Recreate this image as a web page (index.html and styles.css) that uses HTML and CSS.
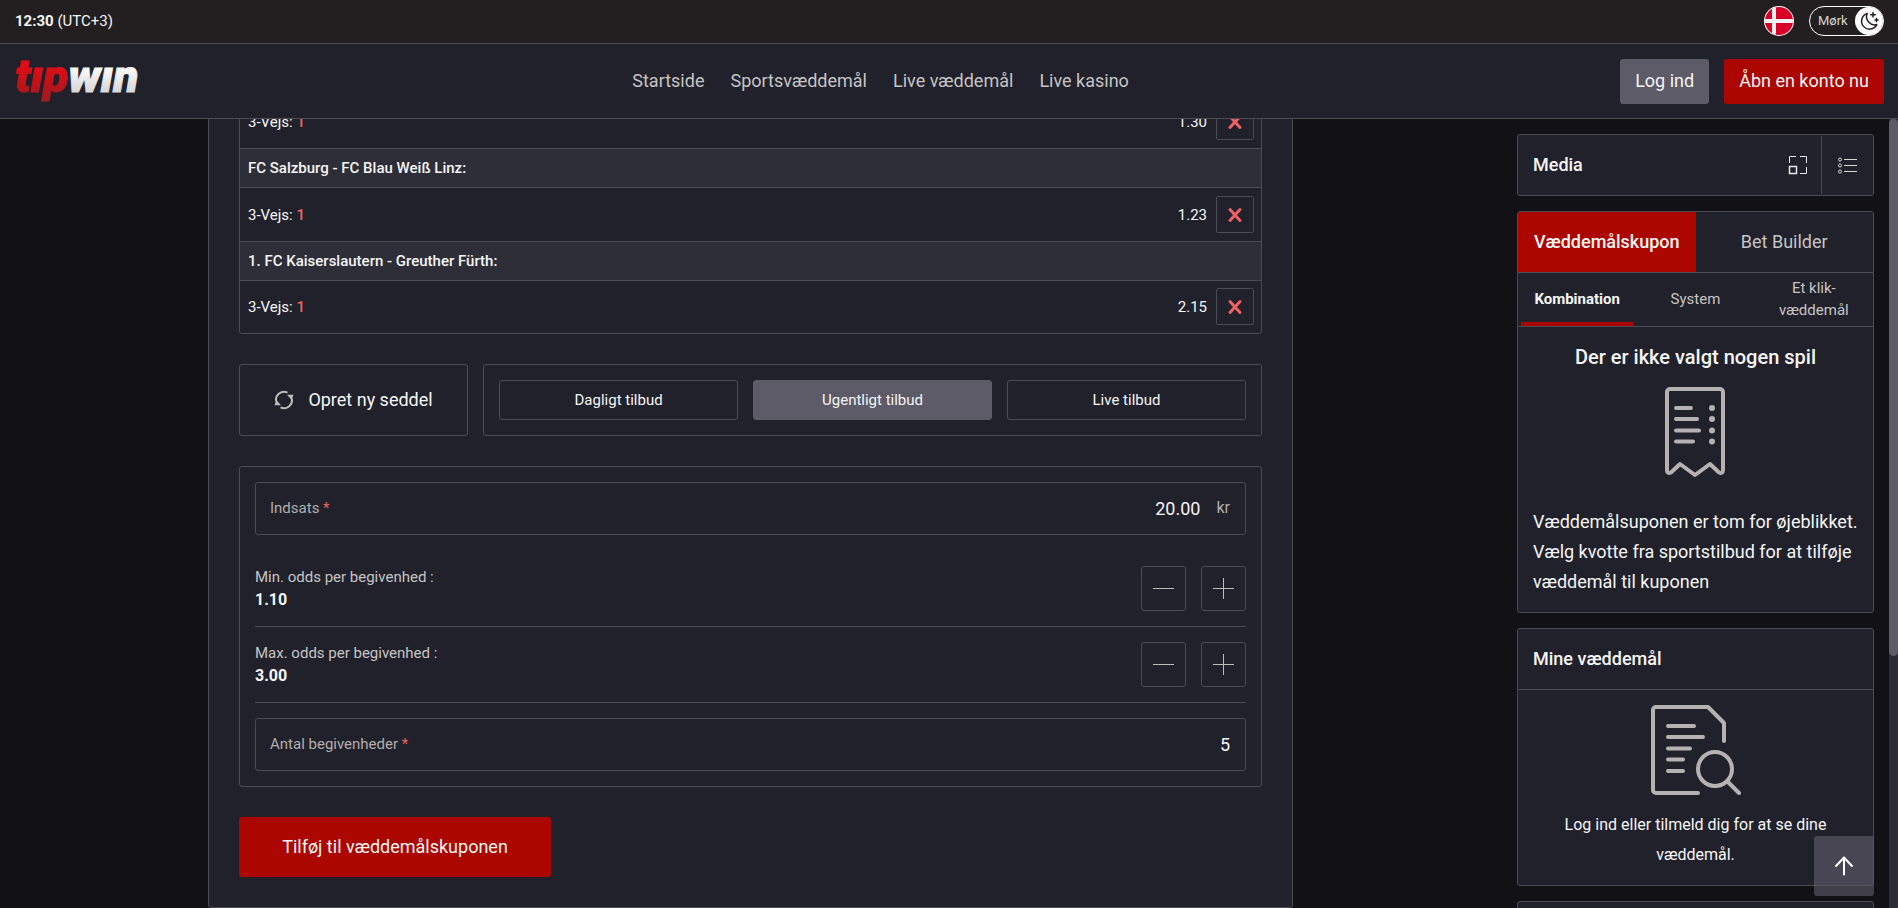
FILE: index.html
```html
<!DOCTYPE html>
<html lang="da">
<head>
<meta charset="utf-8">
<meta name="viewport" content="width=device-width, initial-scale=1">
<title>Tipwin</title>
<link rel="stylesheet" href="styles.css">
</head>
<body>
<div class="topbar">
  <div class="clock"><strong>12:30</strong> (UTC+3)</div>
  <div class="topbar-tools">
    <button class="flag" type="button" aria-label="Dansk">
      <svg width="30" height="30" viewBox="0 0 30 30">
        <clipPath id="disc"><circle cx="15" cy="15" r="14"/></clipPath>
        <circle cx="15" cy="15" r="15" fill="#fff"/>
        <g clip-path="url(#disc)">
          <rect width="30" height="30" fill="#d80027"/>
          <path d="M8 0h4v30h-4zM0 13h30v4H0z" fill="#f0f0f0"/>
        </g>
      </svg>
    </button>
    <button class="theme" type="button">
      <span class="theme-name">Mørk</span>
      <span class="theme-knob">
        <svg width="20" height="20" viewBox="0 0 20 20" fill="none" stroke="#231f20" stroke-width="1.5" stroke-linecap="round" stroke-linejoin="round">
          <path d="M8.2 2.5A8 8 0 1 0 17.8 13.6 8.2 8.2 0 0 1 8.2 2.5z"/>
          <path d="M14 1.500v4.600M11.700 3.800h4.600M17.500 7.500v3M16 9h3"/>
        </svg>
      </span>
    </button>
  </div>
</div>

<header class="header">
  <a class="logo" href="#" aria-label="tipwin">
    <svg width="126" height="60" viewBox="0 0 126 60">
      <defs>
        <linearGradient id="logo-red" x1="0" y1="0" x2="0" y2="1"><stop offset=".3" stop-color="#e30b17"/><stop offset=".9" stop-color="#a3191c"/></linearGradient>
        <linearGradient id="logo-white" x1="0" y1="0" x2="0" y2="1"><stop offset=".3" stop-color="#ffffff"/><stop offset="1" stop-color="#c8c6c6"/></linearGradient>
      </defs>
      <text class="logo-text" x="0" y="41"><tspan fill="url(#logo-red)" stroke="url(#logo-red)">tıp</tspan><tspan fill="url(#logo-white)" stroke="url(#logo-white)">wın</tspan></text>
    </svg>
  </a>
  <nav class="nav">
    <a href="#">Startside</a>
    <a href="#">Sportsvæddemål</a>
    <a href="#">Live væddemål</a>
    <a href="#">Live kasino</a>
  </nav>
  <div class="account">
    <button class="btn btn-grey" type="button">Log ind</button>
    <button class="btn btn-red" type="button">Åbn en konto nu</button>
  </div>
</header>

<div class="page">
  <main class="content">
    <section class="panel">
      <div class="matches">
        <div class="pick">
          <span class="pick-name">3-Vejs: <b>1</b></span>
          <span class="pick-odds">1.30</span>
          <button class="remove" type="button" aria-label="Fjern"><svg width="16" height="16" viewBox="0 0 16 16"><path d="M3 2.500l10 11M13 2.500L3 13.500"/></svg></button>
        </div>
        <h3 class="match">FC Salzburg - FC Blau Weiß Linz:</h3>
        <div class="pick">
          <span class="pick-name">3-Vejs: <b>1</b></span>
          <span class="pick-odds">1.23</span>
          <button class="remove" type="button" aria-label="Fjern"><svg width="16" height="16" viewBox="0 0 16 16"><path d="M3 2.500l10 11M13 2.500L3 13.500"/></svg></button>
        </div>
        <h3 class="match">1. FC Kaiserslautern - Greuther Fürth:</h3>
        <div class="pick">
          <span class="pick-name">3-Vejs: <b>1</b></span>
          <span class="pick-odds">2.15</span>
          <button class="remove" type="button" aria-label="Fjern"><svg width="16" height="16" viewBox="0 0 16 16"><path d="M3 2.500l10 11M13 2.500L3 13.500"/></svg></button>
        </div>
      </div>

      <div class="offers">
        <button class="new-slip" type="button">
          <svg width="20" height="20" viewBox="0 0 20 20" fill="none" stroke="#bdbbbb" stroke-width="2">
            <path d="M2.200 11.500A8 8 0 0 1 13.500 2.600"/>
            <path d="M17.800 8.500A8 8 0 0 1 6.500 17.400"/>
            <path d="M13 4.800h6.500L17.600 10zM7 15.200H.5L2.400 10z" fill="#bdbbbb" stroke="none"/>
          </svg>
          Opret ny seddel
        </button>
        <div class="offer-tabs">
          <button class="offer" type="button">Dagligt tilbud</button>
          <button class="offer offer-active" type="button">Ugentligt tilbud</button>
          <button class="offer" type="button">Live tilbud</button>
        </div>
      </div>

      <form class="form">
        <div class="field">
          <label for="stake">Indsats <i>*</i></label>
          <input id="stake" type="text" value="20.00">
          <span class="unit">kr</span>
        </div>
        <div class="steps">
          <div class="step">
            <div class="step-text"><span>Min. odds per begivenhed :</span><output>1.10</output></div>
            <button class="square" type="button" aria-label="Mindre"><svg width="23" height="23" viewBox="0 0 23 23"><path d="M1 11.500h21"/></svg></button>
            <button class="square" type="button" aria-label="Mere"><svg width="23" height="23" viewBox="0 0 23 23"><path d="M1 11.500h21M11.500 1v21"/></svg></button>
          </div>
          <div class="step">
            <div class="step-text"><span>Max. odds per begivenhed :</span><output>3.00</output></div>
            <button class="square" type="button" aria-label="Mindre"><svg width="23" height="23" viewBox="0 0 23 23"><path d="M1 11.500h21"/></svg></button>
            <button class="square" type="button" aria-label="Mere"><svg width="23" height="23" viewBox="0 0 23 23"><path d="M1 11.500h21M11.500 1v21"/></svg></button>
          </div>
        </div>
        <div class="field">
          <label for="events">Antal begivenheder <i>*</i></label>
          <input id="events" type="text" value="5">
        </div>
      </form>

      <button class="submit" type="button">Tilføj til væddemålskuponen</button>
    </section>
  </main>

  <aside class="sidebar">
    <section class="card media">
      <h2 class="card-title">Media</h2>
      <button class="media-btn" type="button" aria-label="Udvid">
        <svg width="20" height="20" viewBox="0 0 20 20" fill="none" stroke="#e8e8e8" stroke-width="1"><path d="M1.500 8V1.500H8M12 1.500h6.500V8M18.500 12v6.500H12"/><path d="M1.500 11.500h7v7h-7z" stroke-width="1.500"/></svg>
      </button>
      <button class="media-btn media-list" type="button" aria-label="Liste">
        <svg width="20" height="20" viewBox="1 0 20 20" fill="none" stroke="#d8d8d8" stroke-width="1"><circle cx="3" cy="4.500" r="1.500"/><circle cx="3" cy="10.500" r="1.500"/><circle cx="3" cy="16.500" r="1.500"/><path d="M7 4.500h13M7 10.500h13M7 16.500h13"/></svg>
      </button>
    </section>

    <section class="card">
      <div class="tabs">
        <button class="tab tab-active" type="button">Væddemålskupon</button>
        <button class="tab" type="button">Bet Builder</button>
      </div>
      <div class="subtabs">
        <button class="subtab subtab-active" type="button">Kombination</button>
        <button class="subtab" type="button">System</button>
        <button class="subtab" type="button">Et klik-væddemål</button>
      </div>
      <div class="slip">
        <h2 class="slip-title">Der er ikke valgt nogen spil</h2>
        <svg class="art" width="90" height="90" viewBox="0 0 90 90">
          <path d="M19 2h50a3 3 0 0 1 3 3v78q0 4-4 2.500L59 77 44 88 29 77l-9 8.500q-4 1.500-4-2.500V5a3 3 0 0 1 3-3z"/>
          <path d="M25 21h15M25 32h21M25 43.500h23M25 54.500h17"/>
          <path d="M61 21v0M61 32v0M61 43.500v0M61 54.500v0" stroke-width="6"/>
        </svg>
        <p>Væddemålsuponen er tom for øjeblikket. Vælg kvotte fra sportstilbud for at tilføje væddemål til kuponen</p>
      </div>
    </section>

    <section class="card">
      <h2 class="card-title card-head">Mine væddemål</h2>
      <div class="bets">
        <svg class="art" width="90" height="90" viewBox="0 0 90 90">
          <path d="M47 88H5a3 3 0 0 1-3-3V5a3 3 0 0 1 3-3h52L73 18v18"/>
          <path d="M17 21h26M17 32h35M17 43.500h22M17 54.500h15M17 66h15"/>
          <circle cx="64" cy="64" r="17"/>
          <path d="M77 77l11 11"/>
        </svg>
        <p>Log ind eller tilmeld dig for at se dine væddemål.</p>
      </div>
    </section>

    <section class="card card-next"></section>
  </aside>

  <div class="scrollbar"><div class="scroll-thumb"></div></div>
  <button class="to-top" type="button" aria-label="Til toppen">
    <svg width="20" height="20" viewBox="0 0 20 20" fill="none" stroke="#fff" stroke-width="2" stroke-linecap="round" stroke-linejoin="round"><path d="M10 18.500V1.500M2 10l8-8.500L18 10"/></svg>
  </button>
</div>
</body>
</html>
```
FILE: styles.css
```css
:root {
  --back: #111116;
  --surface: #21212b;
  --raised: #2e2e38;
  --line: #4c4b54;
  --grey: #5c5b67;
  --red: #ab0700;
  --accent: #f06262;
  --text: #f5f5f5;
  --muted: #c6c4c4;
}

* { box-sizing: border-box; }

body {
  margin: 0;
  height: 100vh;
  display: flex;
  flex-direction: column;
  overflow: hidden;
  background: var(--back);
  color: var(--text);
  font: 15px/22px Roboto, sans-serif;
}

button, input {
  margin: 0;
  padding: 0;
  border: 0;
  background: none;
  color: inherit;
  font: inherit;
}

button { cursor: pointer; }
a { color: inherit; text-decoration: none; }
h2, h3, p { margin: 0; }
svg { display: block; }

/* Top bar */
.topbar {
  display: flex;
  align-items: center;
  justify-content: space-between;
  height: 44px;
  flex: none;
  padding: 0 14px 2px 15px;
  background: #231f20;
  border-bottom: 1px solid var(--line);
}
.clock { font-weight: 400; }
.clock strong { font-weight: 700; }
.topbar-tools { display: flex; gap: 15px; }
.theme {
  display: flex;
  align-items: center;
  justify-content: space-between;
  width: 75px;
  height: 30px;
  padding-left: 8px;
  border: 1px solid #fff;
  border-radius: 15px;
  font-size: 13px;
  color: #d8d6d6;
}
.theme-knob {
  display: grid;
  place-items: center;
  width: 28px;
  height: 28px;
  border-radius: 50%;
  background: #fff;
}

/* Header */
.header {
  display: flex;
  align-items: center;
  justify-content: space-between;
  height: 75px;
  flex: none;
  padding: 0 14px 0 15px;
  background: var(--surface);
  border-bottom: 1px solid var(--line);
}
.logo-text {
  font: italic 900 46px Roboto, sans-serif;
  stroke-width: 1;
}
.nav {
  display: flex;
  gap: 26px;
  font-size: 18px;
  color: var(--muted);
}
.account { display: flex; gap: 15px; }
.btn {
  height: 45px;
  padding: 0 15px;
  border-radius: 3px;
  font-size: 18px;
}
.btn-grey { background: var(--grey); }
.btn-red { background: var(--red); }

/* Page columns */
.page {
  position: relative;
  display: flex;
  flex: 1;
  min-height: 0;
}
.content {
  display: flex;
  flex: 1;
  flex-direction: column;
  align-items: center;
  justify-content: flex-end;
  overflow: hidden;
}
.panel {
  width: 100%;
  max-width: 1085px;
  padding: 0 30px 30px;
  background: var(--surface);
  border: 1px solid var(--line);
  border-radius: 3px;
}

/* Selected matches */
.matches {
  border: 1px solid var(--line);
  border-radius: 3px;
}
.match {
  padding: 8px;
  background: var(--raised);
  border-bottom: 1px solid var(--line);
  font-size: 15px;
  font-weight: 500;
}
.pick {
  display: flex;
  align-items: center;
  gap: 9px;
  padding: 8px 7px 8px 8px;
  border-bottom: 1px solid var(--line);
}
.pick:last-child {
  padding-top: 7px;
  border-bottom: 0;
}
.pick-name { flex: 1; }
.pick-name b { font-weight: 500; color: var(--accent); }
.remove {
  display: grid;
  place-items: center;
  width: 38px;
  height: 37px;
  border: 1px solid var(--line);
  border-radius: 2px;
}
.remove path {
  stroke: var(--accent);
  stroke-width: 3;
  stroke-linecap: round;
}

/* Offers */
.offers {
  display: grid;
  grid-template-columns: 5fr 17fr;
  gap: 15px;
  margin: 30px 0;
}
.new-slip {
  display: flex;
  align-items: center;
  justify-content: center;
  gap: 14px;
  border: 1px solid var(--line);
  border-radius: 3px;
  font-size: 18px;
}
.offer-tabs {
  display: grid;
  grid-template-columns: repeat(3, 1fr);
  gap: 15px;
  padding: 15px;
  border: 1px solid var(--line);
  border-radius: 3px;
}
.offer {
  height: 40px;
  border: 1px solid var(--line);
  border-radius: 3px;
}
.offer-active {
  background: var(--grey);
  border-color: var(--grey);
}

/* Form */
.form {
  padding: 15px;
  border: 1px solid var(--line);
  border-radius: 3px;
}
.field {
  display: flex;
  align-items: center;
  height: 53px;
  padding: 0 15px 0 14px;
  border: 1px solid var(--line);
  border-radius: 3px;
  color: #b0aeae;
}
.field label { padding-bottom: 2px; }
.field i { color: var(--accent); font-style: normal; }
.field input {
  flex: 1;
  min-width: 0;
  text-align: right;
  font-size: 18px;
  color: var(--text);
  outline: 0;
}
.unit { margin-left: 16px; padding-bottom: 2px; font-size: 16px; }
.steps { padding: 16px 0 15px; }
.step {
  display: flex;
  align-items: center;
  gap: 15px;
  padding: 15px 0;
  border-bottom: 1px solid var(--line);
}
.step-text {
  display: flex;
  flex: 1;
  flex-direction: column;
  gap: 1px;
  color: var(--muted);
}
.step-text output {
  font-size: 16px;
  font-weight: 700;
  color: var(--text);
}
.square {
  display: grid;
  place-items: center;
  width: 45px;
  height: 45px;
  border: 1px solid var(--line);
  border-radius: 3px;
}
.square path { stroke: #bdbbbb; stroke-width: 1; }
.submit {
  width: 312px;
  height: 60px;
  margin-top: 30px;
  border-radius: 3px;
  background: var(--red);
  font-size: 18px;
}

/* Sidebar */
.sidebar {
  display: flex;
  flex: none;
  flex-direction: column;
  gap: 15px;
  width: 388px;
  padding: 15px 15px 0 16px;
  overflow: hidden;
}
.card {
  flex: none;
  background: var(--surface);
  border: 1px solid var(--line);
  border-radius: 3px;
  overflow: hidden;
}
.card-title {
  padding: 0 15px;
  font-size: 18px;
  font-weight: 500;
  line-height: 60px;
}
.card-head { border-bottom: 1px solid var(--line); }
.media { display: flex; align-items: center; }
.media .card-title { flex: 1; }
.media-btn {
  display: grid;
  place-items: center;
  width: 46px;
  height: 58px;
}
.media-list {
  width: 52px;
  border-left: 1px solid var(--line);
}
.tabs {
  display: grid;
  grid-template-columns: 1fr 1fr;
  border-bottom: 1px solid var(--line);
}
.tab {
  height: 60px;
  font-size: 18px;
  color: var(--muted);
}
.tab-active {
  background: var(--red);
  font-weight: 500;
  color: var(--text);
}
.subtabs {
  display: grid;
  grid-template-columns: repeat(3, 1fr);
  border-bottom: 1px solid var(--line);
}
.subtab {
  height: 53px;
  margin: 0 3px;
  padding: 0 20px;
  border-bottom: 4px solid transparent;
  border-top: 2px solid transparent;
  color: var(--muted);
}
.subtab-active {
  padding: 0;
  border-bottom-color: var(--red);
  font-weight: 700;
  color: var(--text);
}
.slip, .bets {
  display: flex;
  flex-direction: column;
  align-items: center;
  padding: 15px;
  line-height: 30px;
}
.slip-title { font-size: 20px; font-weight: 500; }
.slip .art { margin: 15px 0 30px; }
.slip p { font-size: 18px; }
.bets .art { margin-bottom: 15px; }
.bets p { font-size: 16px; text-align: center; }
.art path, .art circle {
  fill: none;
  stroke: #b7b2b2;
  stroke-width: 4;
  stroke-linecap: round;
  stroke-linejoin: round;
}
.art path[stroke-width] { stroke-width: 6; }
.card-next { height: 60px; }

/* Scroll track and return button */
.scrollbar {
  width: 9px;
  flex: none;
  background: #2c2c36;
}
.scroll-thumb {
  height: 68%;
  border-radius: 5px;
  background: var(--grey);
}
.to-top {
  position: absolute;
  right: 24px;
  bottom: 12px;
  display: grid;
  place-items: center;
  width: 60px;
  height: 60px;
  border-radius: 3px;
  background: rgba(92, 91, 103, 0.65);
}
```
